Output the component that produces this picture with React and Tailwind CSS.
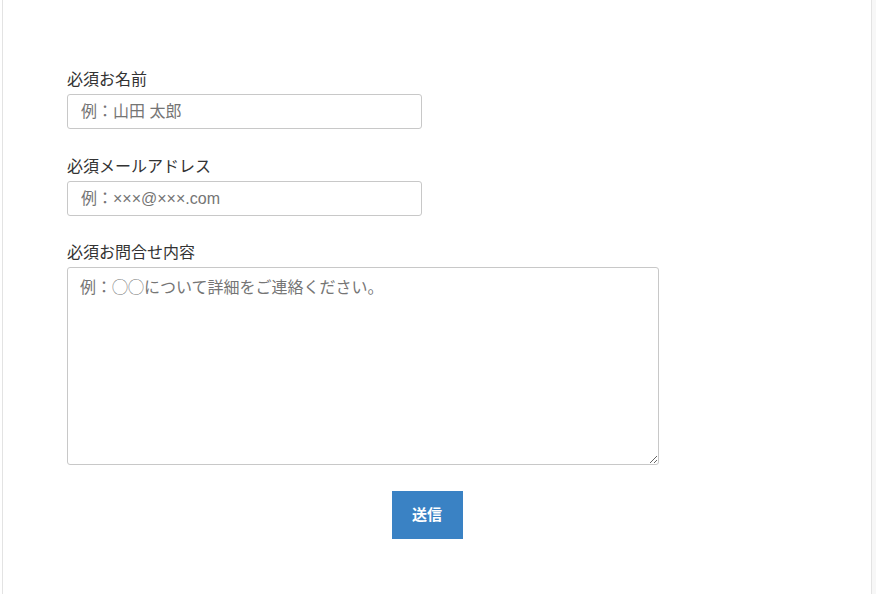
import { useState } from 'react';

const fields = [
  { id: 'name', label: 'お名前', placeholder: '例：山田 太郎', type: 'text' },
  { id: 'email', label: 'メールアドレス', placeholder: '例：×××@×××.com', type: 'email' },
];

export default function App() {
  const [form, setForm] = useState({ name: '', email: '', message: '' });

  const update = (key) => (e) => setForm({ ...form, [key]: e.target.value });

  return (
    <div
      className="flex w-full h-[594px] bg-[#f7f7f7] text-[#333]"
      style={{ fontFamily: '"Liberation Sans", "Noto Sans CJK JP", sans-serif' }}
    >
      <div className="w-[2px] bg-white" />
      <div className="w-[870px] h-full bg-white border-x border-[#e3e3e3]">
        <form
          className="pt-[70px] pl-[64px] pr-[84px]"
          onSubmit={(e) => e.preventDefault()}
        >
          {fields.map((f, i) => (
            <div key={f.id} className={i > 0 ? 'mt-[28px]' : ''}>
              <label htmlFor={f.id} className="block text-[16px] leading-[20px] mb-[4px]">
                必須{f.label}
              </label>
              <input
                id={f.id}
                type={f.type}
                value={form[f.id]}
                onChange={update(f.id)}
                placeholder={f.placeholder}
                className="block w-[355px] h-[35px] px-[13px] text-[16px] border border-[#c8c8c8] rounded-[3px] placeholder:text-[#757575] outline-none"
              />
            </div>
          ))}

          <div className="mt-[27px]">
            <label htmlFor="message" className="block text-[16px] leading-[20px] mb-[4px]">
              必須お問合せ内容
            </label>
            <textarea
              id="message"
              value={form.message}
              onChange={update('message')}
              placeholder="例：◯◯について詳細をご連絡ください。"
              className="block w-[592px] h-[198px] px-[12px] py-[8px] text-[16px] leading-6 border border-[#c8c8c8] rounded-[3px] placeholder:text-[#757575] outline-none"
            />
          </div>

          <div className="flex justify-center mt-[26px]">
            <button
              type="submit"
              className="w-[71px] h-[48px] bg-[#3a82c4] text-white text-[15px] font-bold"
            >
              送信
            </button>
          </div>
        </form>
      </div>
    </div>
  );
}
